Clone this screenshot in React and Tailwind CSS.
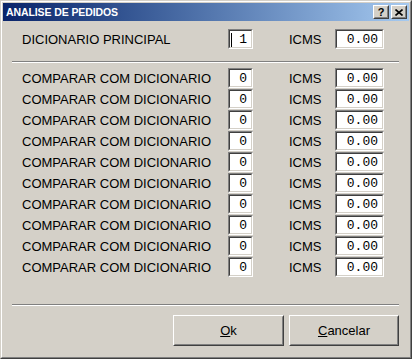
import React from "react";

const SANS = { fontFamily: '"Liberation Sans", Arial, sans-serif' };
const MONO = { fontFamily: '"Liberation Mono", "Courier New", monospace' };

function Field({ w, value, caret }) {
  return (
    <div className={`relative ${w} h-[20px] border border-t-[#808080] border-l-[#808080] border-b-white border-r-white`}>
      <div className="h-full w-full border border-t-[#404040] border-l-[#404040] border-b-[#d4d0c8] border-r-[#d4d0c8] bg-white flex items-center justify-end pr-[4px]">
        <span className="text-[13px] leading-none text-black" style={MONO}>{value}</span>
      </div>
      {caret && <div className="absolute left-[2px] top-[3px] h-[14px] w-[1px] bg-black" />}
    </div>
  );
}

function Row({ label, value, caret }) {
  return (
    <div className="flex items-center h-[20px]">
      <div className="w-[206px] text-[13px] text-black whitespace-nowrap leading-none">{label}</div>
      <Field w="w-[25px]" value={value} caret={caret} />
      <div className="ml-[36px] w-[46px] text-[13px] text-black leading-none">ICMS</div>
      <Field w="w-[49px]" value="0.00" />
    </div>
  );
}

function Sep() {
  return (
    <div className="ml-[9px] w-[387px]">
      <div className="h-[1px] bg-[#808080]" />
      <div className="h-[1px] bg-white" />
    </div>
  );
}

function Btn({ children }) {
  return (
    <div className="h-[31px] border border-t-white border-l-white border-b-[#404040] border-r-[#404040]">
      <div className="h-full w-full border border-t-[#d4d0c8] border-l-[#d4d0c8] border-b-[#808080] border-r-[#808080] flex items-center justify-center text-[13px] text-black">
        {children}
      </div>
    </div>
  );
}

function CapBtn({ children }) {
  return (
    <div className="w-[16px] h-[14px] bg-[#d4d0c8] border border-t-white border-l-white border-b-[#404040] border-r-[#404040]">
      <div className="h-full w-full border border-t-[#d4d0c8] border-l-[#d4d0c8] border-b-[#808080] border-r-[#808080] flex items-center justify-center">
        {children}
      </div>
    </div>
  );
}

export default function App() {
  const rows = Array.from({ length: 10 });
  return (
    <div className="w-[412px] h-[359px] bg-[#d4d0c8] border border-t-[#d4d0c8] border-l-[#d4d0c8] border-b-[#404040] border-r-[#404040]" style={SANS}>
      <div className="h-full w-full border border-t-white border-l-white border-b-[#808080] border-r-[#808080] p-[1px] flex flex-col">
        <div className="h-[18px] flex items-center bg-gradient-to-r from-[#0a246a] to-[#a6caf0] pl-[3px] pr-[2px]">
          <span className="text-white font-bold text-[10.5px] leading-none tracking-[-0.1px]">ANALISE DE PEDIDOS</span>
          <div className="ml-auto flex gap-[2px]">
            <CapBtn>
              <span className="text-[11px] font-bold leading-none text-black mt-[1px]">?</span>
            </CapBtn>
            <CapBtn>
              <svg width="8" height="7" viewBox="0 0 8 7">
                <path d="M0.5 0.5 L7.5 6.5 M7.5 0.5 L0.5 6.5" stroke="black" strokeWidth="1.6" />
              </svg>
            </CapBtn>
          </div>
        </div>
        <div className="flex flex-col pl-[19px] pt-[8px]">
          <Row label="DICIONARIO PRINCIPAL" value="1" caret />
        </div>
        <div className="mt-[12px]">
          <Sep />
        </div>
        <div className="flex flex-col gap-[1px] pl-[19px] mt-[5px]">
          {rows.map((_, i) => (
            <Row key={i} label="COMPARAR COM DICIONARIO" value="0" />
          ))}
        </div>
        <div className="mt-[27px]">
          <Sep />
        </div>
        <div className="flex gap-[5px] pl-[170px] mt-[9px]">
          <div className="w-[111px]">
            <Btn><span><u>O</u>k</span></Btn>
          </div>
          <div className="w-[110px]">
            <Btn><span><u>C</u>ancelar</span></Btn>
          </div>
        </div>
      </div>
    </div>
  );
}
